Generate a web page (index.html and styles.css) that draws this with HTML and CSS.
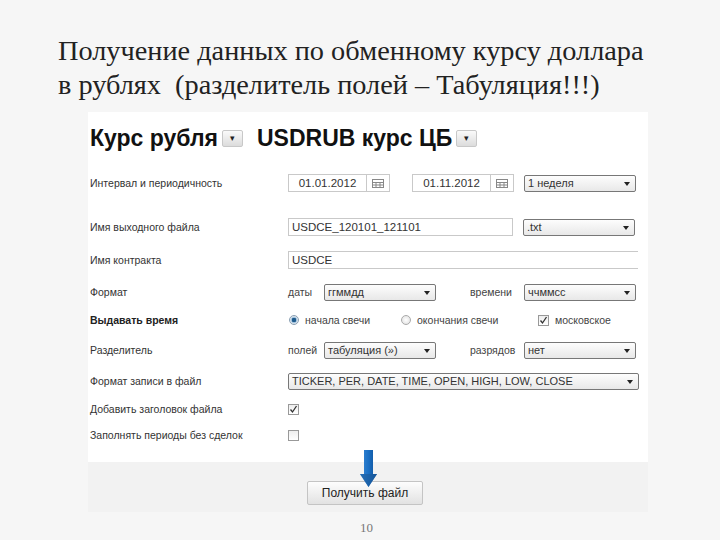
FILE: index.html
```html
<!DOCTYPE html>
<html lang="ru">
<head>
<meta charset="utf-8">
<link rel="stylesheet" href="styles.css">
</head>
<body>
<div class="page">
  <h1 class="title">Получение данных по обменному курсу доллара<br>в рублях&nbsp; (разделитель полей – Табуляция!!!)</h1>
  <div class="panel">
    <div class="main">
      <div class="heading">
        <span>Курс рубля</span><span class="hbtn">&#9662;</span>
        <span class="h2">USDRUB курс ЦБ</span><span class="hbtn">&#9662;</span>
      </div>
      <div class="form">
        <div class="label">Интервал и периодичность</div>
        <div class="ctl">
          <span class="input date">01.01.2012</span><span class="cal"><svg width="12" height="9" viewBox="0 0 12 9"><rect x="0.5" y="0.5" width="11" height="8" fill="none" stroke="#888"/><path d="M0.5 3.5H11.5M0.5 6H11.5M4 3.5V8.5M8 3.5V8.5" stroke="#888" fill="none"/></svg></span>
          <span class="input date d2">01.11.2012</span><span class="cal"><svg width="12" height="9" viewBox="0 0 12 9"><rect x="0.5" y="0.5" width="11" height="8" fill="none" stroke="#888"/><path d="M0.5 3.5H11.5M0.5 6H11.5M4 3.5V8.5M8 3.5V8.5" stroke="#888" fill="none"/></svg></span>
          <span class="select s-right">1 неделя</span>
        </div>

        <div class="label">Имя выходного файла</div>
        <div class="ctl">
          <span class="input fname">USDCE_120101_121101</span>
          <span class="select s-right">.txt</span>
        </div>

        <div class="label">Имя контракта</div>
        <div class="ctl">
          <span class="input wide">USDCE</span>
        </div>

        <div class="label">Формат</div>
        <div class="ctl">
          <span class="word w1">даты</span><span class="select s-mid">ггммдд</span>
          <span class="word w2">времени</span><span class="select s-right2">ччммсс</span>
        </div>

        <div class="label bold">Выдавать время</div>
        <div class="ctl">
          <span class="radio on"></span><span class="rtext t1">начала свечи</span>
          <span class="radio"></span><span class="rtext t2">окончания свечи</span>
          <span class="check on"><svg width="9" height="9" viewBox="0 0 9 9"><path d="M1.5 4.5L3.5 7L7.5 1" fill="none" stroke="#333" stroke-width="1.3"/></svg></span><span class="rtext">московское</span>
        </div>

        <div class="label">Разделитель</div>
        <div class="ctl">
          <span class="word w1">полей</span><span class="select s-mid">табуляция (»)</span>
          <span class="word w2">разрядов</span><span class="select s-right2">нет</span>
        </div>

        <div class="label">Формат записи в файл</div>
        <div class="ctl">
          <span class="select wide-sel">TICKER, PER, DATE, TIME, OPEN, HIGH, LOW, CLOSE</span>
        </div>

        <div class="label">Добавить заголовок файла</div>
        <div class="ctl">
          <span class="check on"><svg width="9" height="9" viewBox="0 0 9 9"><path d="M1.5 4.5L3.5 7L7.5 1" fill="none" stroke="#333" stroke-width="1.3"/></svg></span>
        </div>

        <div class="label">Заполнять периоды без сделок</div>
        <div class="ctl">
          <span class="check"></span>
        </div>
      </div>
    </div>
    <div class="footer">
      <span class="getbtn">Получить файл</span>
      <svg class="arrow" width="17" height="38" viewBox="0 0 17 38">
        <defs>
          <linearGradient id="g" x1="0" x2="1" y1="0" y2="0">
            <stop offset="0" stop-color="#3a8ad6"/>
            <stop offset="0.5" stop-color="#1a6fc4"/>
            <stop offset="1" stop-color="#0f4f95"/>
          </linearGradient>
        </defs>
        <path d="M4 0H13V24H17L8.5 37L0 24H4Z" fill="url(#g)"/>
        <path d="M0 24H17L8.5 37Z" fill="#1d5a99" opacity="0.6"/>
      </svg>
    </div>
  </div>
  <div class="pagenum">10</div>
</div>
</body>
</html>
```

FILE: styles.css
```css
html, body {
  margin: 0;
  padding: 0;
}
body {
  background: #f6f6f6;
  width: 720px;
  height: 540px;
  overflow: hidden;
}
.page {
  padding-top: 34px;
}
.title {
  margin: 0 0 0 58px;
  font-family: "Liberation Serif", "Times New Roman", serif;
  font-weight: normal;
  font-size: 28.3px;
  line-height: 34px;
  color: #222;
  height: 78px;
}
.panel {
  margin-left: 88px;
  width: 560px;
  font-family: "Liberation Sans", Arial, sans-serif;
  position: relative;
}
.main {
  background: #fff;
  height: 350px;
}
.heading {
  box-sizing: border-box;
  height: 49px;
  padding-top: 4px;
  display: flex;
  align-items: center;
  padding-left: 2px;
  font-size: 23px;
  font-weight: bold;
  color: #111;
}
.hbtn {
  width: 19px;
  height: 15px;
  margin-left: 4px;
  border: 1px solid #c8c8c8;
  border-radius: 2px;
  background: linear-gradient(#fafafa, #dcdcdc);
  font-size: 9px;
  line-height: 15px;
  text-align: center;
  color: #222;
  font-weight: normal;
}
.h2 {
  margin-left: 14px;
}
.form {
  display: grid;
  grid-template-columns: 200px 1fr;
  grid-template-rows: 44px 44px 22px 42px 14px 46px 16px 40px 12px;
  font-size: 10.5px;
  color: #444;
}
.label {
  display: flex;
  align-items: center;
  padding-left: 2px;
  color: #333;
}
.label.bold {
  font-weight: bold;
  color: #222;
}
.ctl {
  display: flex;
  align-items: center;
}
.input {
  box-sizing: border-box;
  flex-shrink: 0;
  height: 18px;
  border: 1px solid #c9c9c9;
  background: #fff;
  font-size: 11.5px;
  line-height: 16px;
  color: #333;
  padding-left: 3px;
}
.date {
  width: 79px;
  text-align: center;
  padding-left: 0;
}
.d2 {
  margin-left: 22px;
}
.cal {
  box-sizing: border-box;
  flex-shrink: 0;
  width: 23px;
  height: 18px;
  border: 1px solid #c9c9c9;
  border-left: none;
  display: flex;
  align-items: center;
  justify-content: center;
}
.fname {
  width: 225px;
}
.wide {
  width: 350px;
  border-right: none;
}
.select {
  box-sizing: border-box;
  flex-shrink: 0;
  height: 17px;
  border: 1px solid #777;
  border-radius: 2px;
  background: linear-gradient(#fdfdfd, #e8e8e8);
  padding-left: 3px;
  line-height: 15px;
  font-size: 11px;
  color: #333;
  position: relative;
}
.select::after {
  content: "";
  position: absolute;
  right: 5px;
  top: 6px;
  border-left: 3.5px solid transparent;
  border-right: 3.5px solid transparent;
  border-top: 4px solid #222;
}
.s-right {
  width: 112px;
  margin-left: 10px;
}
.s-mid {
  width: 112px;
}
.s-right2 {
  width: 112px;
}
.wide-sel {
  width: 351px;
}
.word {
  color: #444;
}
.w1 {
  width: 36px;
}
.w2 {
  margin-left: 34px;
  width: 54px;
}
.radio {
  box-sizing: border-box;
  flex-shrink: 0;
  width: 10px;
  height: 10px;
  border-radius: 50%;
  border: 1px solid #aaa;
  background: radial-gradient(#fff, #ddd);
  margin-left: 1px;
}
.radio.on {
  background: radial-gradient(circle, #1f5b8c 0 2px, #9cc0de 2.5px, #eee 4px);
  border-color: #8a9fb3;
}
.rtext {
  margin-left: 6px;
  color: #444;
}
.t1 {
  width: 95px;
}
.t2 {
  width: 121px;
}
.check {
  box-sizing: border-box;
  flex-shrink: 0;
  width: 11px;
  height: 11px;
  border: 1px solid #999;
  background: linear-gradient(#eee, #fff);
  display: flex;
  align-items: center;
  justify-content: center;
}
.footer {
  background: #f2f2f2;
  height: 50px;
  display: flex;
  justify-content: center;
  align-items: flex-end;
  padding-bottom: 7px;
  box-sizing: border-box;
  position: relative;
}
.getbtn {
  box-sizing: border-box;
  width: 116px;
  height: 24px;
  margin-right: 6px;
  border: 1px solid #c4c4c4;
  border-radius: 2px;
  background: linear-gradient(#fdfdfd, #e2e2e2);
  font-size: 12px;
  line-height: 22px;
  text-align: center;
  color: #222;
}
.arrow {
  position: absolute;
  left: 272px;
  top: -12px;
}
.pagenum {
  margin-left: 360px;
  margin-top: 8px;
  font-family: "Liberation Serif", serif;
  font-size: 13px;
  color: #777;
}
```
